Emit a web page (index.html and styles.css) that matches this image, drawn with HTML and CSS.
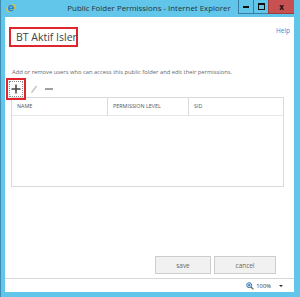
FILE: index.html
```html
<!doctype html>
<html lang="en">
<head>
	<meta charset="UTF-8">
	<title>Public Folder Permissions</title>
	<link rel="stylesheet" href="styles.css">
</head>
<body>
	<div class="window">
		<div class="titlebar">
			<svg class="ie-icon" width="10" height="10" viewBox="0 0 10 10">
				<ellipse cx="5" cy="5" rx="4.6" ry="2.4" transform="rotate(-35 5 5)" fill="none" stroke="#f0c419" stroke-width="1.1"/>
				<path d="M2.6 5.3h4.8c0-1.6-1-2.6-2.4-2.6S2.6 3.8 2.6 5.2c0 1.5 1 2.5 2.4 2.5 1 0 1.8-.5 2.2-1.3" fill="none" stroke="#2f7fd0" stroke-width="1.2"/>
			</svg>
			<div class="title">Public Folder Permissions - Internet Explorer</div>
			<div class="controls">
				<span class="ctl min"><i></i></span>
				<span class="ctl max"><i></i></span>
				<span class="ctl close">x</span>
			</div>
		</div>
		<div class="content">
			<div class="page">
				<div class="head">
					<div class="name-box">BT Aktif Isler</div>
					<a class="help" href="javascript:void(0);">Help</a>
				</div>
				<p class="desc">Add or remove users who can access this public folder and edit their permissions.</p>
				<div class="toolbar">
					<span class="add-box">
						<span class="add">
							<svg width="10" height="10" viewBox="0 0 10 10">
								<path d="M5 0.5v9M0.5 5h9" stroke="#444" stroke-width="1.5"/>
							</svg>
						</span>
					</span>
					<svg class="edit" width="8" height="10" viewBox="0 0 8 10">
						<path d="M1 9.5l.5-2L6 1.5l1.2 1L2.6 8.6z" fill="#c4c4c4"/>
					</svg>
					<span class="remove"></span>
				</div>
				<div class="grid">
					<div class="grid-head">
						<div class="col c1">NAME</div>
						<div class="col c2">PERMISSION LEVEL</div>
						<div class="col c3">SID</div>
					</div>
				</div>
				<div class="buttons">
					<button class="btn save">save</button>
					<button class="btn cancel">cancel</button>
				</div>
			</div>
			<div class="statusbar">
				<svg class="zoom-icon" width="8" height="8" viewBox="0 0 8 8">
					<circle cx="3.2" cy="3.2" r="2.5" fill="#dfeefa" stroke="#3a78b8" stroke-width="1"/>
					<path d="M2 3.2h2.4M3.2 2v2.4" stroke="#2a62a8" stroke-width=".9"/>
					<path d="M5 5l2.4 2.4" stroke="#7a6a40" stroke-width="1.3"/>
				</svg>
				<span class="zoom">100%</span>
				<span class="arrow"></span>
				<span class="grip"></span>
			</div>
		</div>
	</div>
</body>
</html>
```
FILE: styles.css
```css
html, body {
	margin: 0;
	padding: 0;
}
body {
	font-family: "Open Sans", "Noto Sans", sans-serif;
	background: #fff;
}
.window {
	width: 300px;
	height: 297px;
	box-sizing: border-box;
	background: #62c6ea;
	border-left: 1px solid #3f8cb2;
	padding: 0 6px 5px 4px;
	display: flex;
	flex-direction: column;
}
.titlebar {
	height: 17px;
	display: flex;
	align-items: flex-start;
}
.ie-icon {
	margin: 3px 0 0 1px;
}
.title {
	flex: 1;
	text-align: center;
	font-size: 7.9px;
	line-height: 16px;
	color: #26343d;
	padding-left: 44px;
	white-space: nowrap;
}
.controls {
	display: flex;
	height: 14px;
}
.ctl {
	display: flex;
	align-items: center;
	justify-content: center;
	height: 14px;
	box-sizing: border-box;
	border-left: 1px solid #3a7ea3;
	border-bottom: 1px solid #3a7ea3;
}
.min, .max {
	width: 15px;
}
.min i {
	display: block;
	width: 6px;
	height: 2px;
	background: #111;
	margin-top: 1px;
}
.max i {
	display: block;
	width: 5px;
	height: 4px;
	border: 1px solid #111;
	border-top-width: 2px;
}
.close {
	width: 26px;
	background: #c75050;
	color: #111;
	font-size: 8px;
	font-weight: bold;
	line-height: 12px;
	border-color: #9c3c3c;
}
.content {
	flex: 1;
	background: #fff;
	display: flex;
	flex-direction: column;
}
.page {
	flex: 1;
	display: flex;
	flex-direction: column;
	padding: 0 4px 0 6px;
}
.head {
	display: flex;
	justify-content: space-between;
	align-items: flex-start;
	margin-top: 10px;
}
.name-box {
	margin-left: -2px;
	width: 69px;
	height: 20px;
	box-sizing: border-box;
	border: 2px solid #e0262c;
	font-size: 10.5px;
	line-height: 16px;
	color: #444;
	padding-left: 5px;
	white-space: nowrap;
}
.help {
	font-size: 6.5px;
	color: #3b88d4;
	text-decoration: none;
	line-height: 8px;
}
.desc {
	margin: 21px 0 0 1px;
	font-size: 5.8px;
	line-height: 8px;
	color: #666;
	white-space: nowrap;
}
.toolbar {
	display: flex;
	align-items: center;
	height: 21px;
	margin-top: 2px;
}
.add-box {
	margin-left: -5px;
	width: 20px;
	height: 22px;
	box-sizing: border-box;
	border: 2px solid #e0262c;
	padding: 1px;
	display: flex;
	position: relative;
	z-index: 1;
}
.add {
	flex: 1;
	border: 1px dotted #888;
	display: flex;
	align-items: center;
	justify-content: center;
}
.edit {
	margin-left: 4px;
}
.remove {
	width: 8px;
	height: 2px;
	background: #a0a0a0;
	margin-left: 7px;
}
.grid {
	margin-top: -2px;
	width: 273px;
	height: 90px;
	box-sizing: border-box;
	border: 1px solid #dadada;
}
.grid-head {
	display: flex;
	height: 17px;
	border-bottom: 1px solid #e6e6e6;
}
.col {
	font-size: 5.4px;
	line-height: 17px;
	color: #555;
	padding-left: 5px;
	box-sizing: border-box;
}
.c1 {
	width: 96px;
	border-right: 1px solid #dadada;
}
.c2 {
	width: 81px;
	border-right: 1px solid #dadada;
}
.buttons {
	margin-top: auto;
	margin-bottom: 4px;
	display: flex;
	justify-content: flex-end;
	gap: 3px;
	padding-right: 14px;
}
.btn {
	height: 18px;
	box-sizing: border-box;
	border: 1px solid #cdcdcd;
	background: #f1f1f1;
	color: #666;
	font-family: "Open Sans", "Noto Sans", sans-serif;
	font-size: 6.4px;
	padding: 0;
}
.save {
	width: 56px;
}
.cancel {
	width: 62px;
}
.statusbar {
	height: 14px;
	box-sizing: border-box;
	border-top: 1px solid #d8d8d8;
	display: flex;
	align-items: center;
	justify-content: flex-end;
	position: relative;
}
.zoom-icon {
	margin-right: 2px;
}
.zoom {
	font-size: 5.8px;
	color: #333;
	margin-right: 8px;
}
.arrow {
	width: 0;
	height: 0;
	border-left: 2px solid transparent;
	border-right: 2px solid transparent;
	border-top: 2px solid #333;
	margin-right: 11px;
}
.grip {
	position: absolute;
	right: 1px;
	bottom: 1px;
	width: 4px;
	height: 4px;
	background: radial-gradient(circle, #aaa 0.5px, transparent 0.6px) 0 0 / 2px 2px;
}
```
